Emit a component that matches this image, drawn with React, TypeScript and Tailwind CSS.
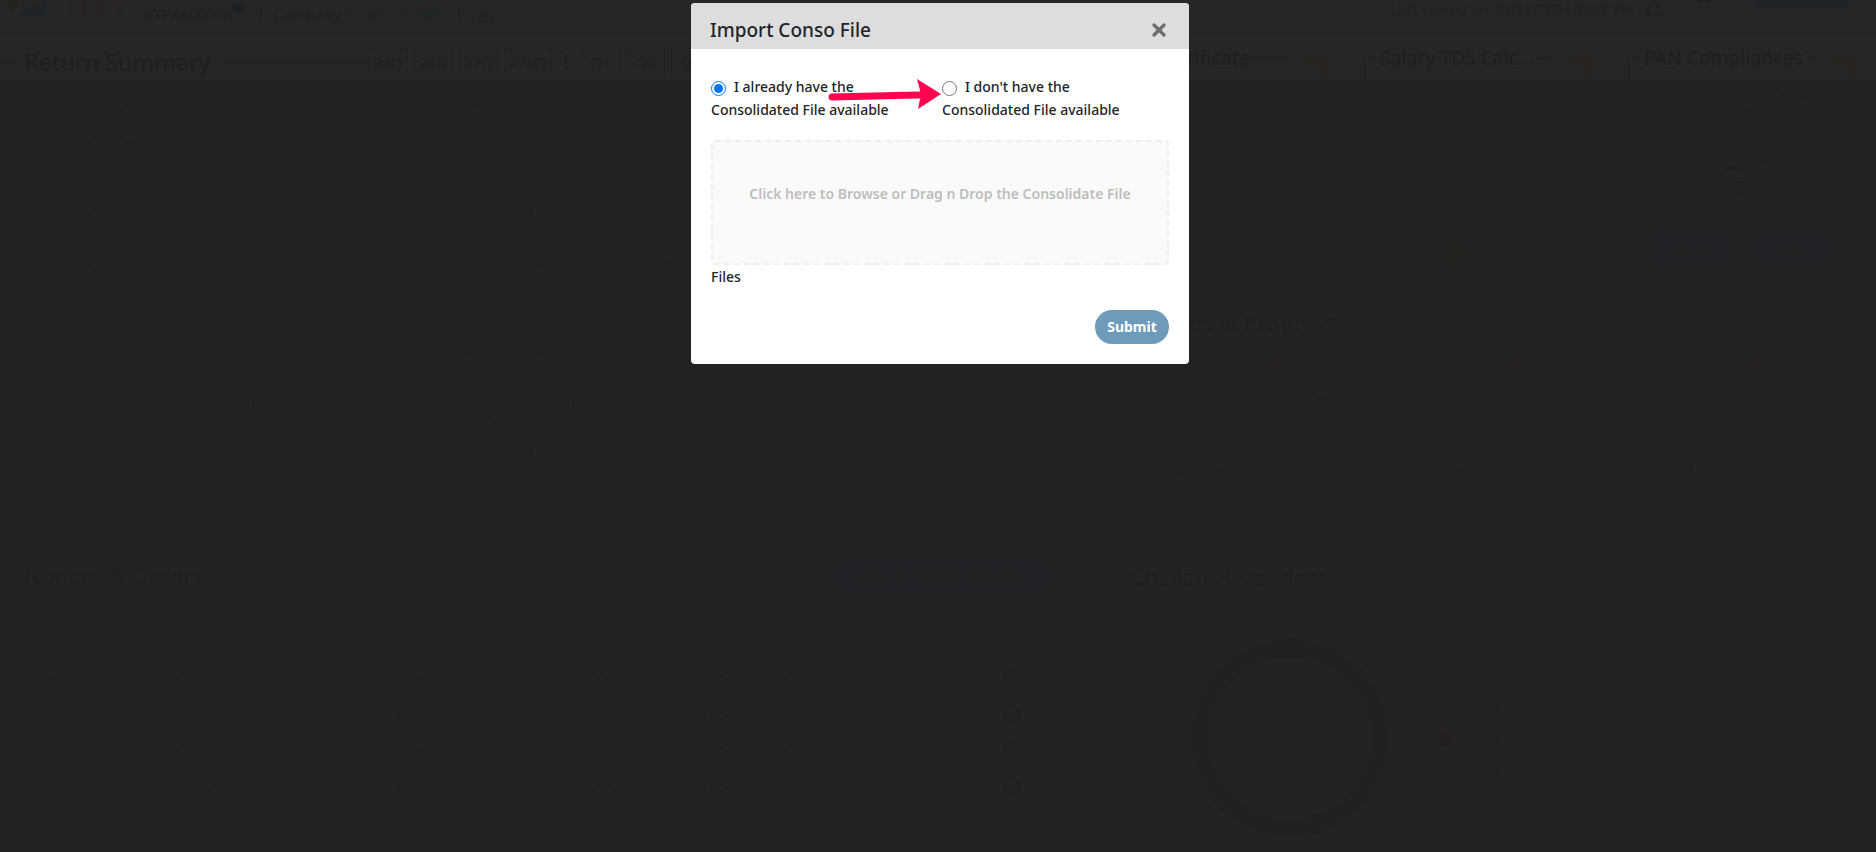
import React, { useState } from 'react';
import { ArrowDown, Download, FileDown, Pencil, Pin, RefreshCw, X } from 'lucide-react';

const forms = ['24Q', '26Q', '27Q', '27EQ'];
const quarters = ['Q1', 'Q2', 'Q3', 'Q4'];

const currentReturns = [
  { form: '24Q | Q4', date: 'In progress', type: 'Regular', status: 'NA', ack: 'NA' },
  { form: '24Q | Q2', date: 'In progress', type: 'Correction', status: 'NA', ack: 'NA' },
  { form: '24Q | Q1', date: '19/07/2024', type: 'Regular', status: 'Processed Without Defaults', ack: '' },
  { form: '26Q | Q2', date: '23/10/2024', type: 'Regular', status: 'Processed With Defaults', ack: 'NA' },
];

const completedReturns = [
  { form: '24Q | Q2', date: '17/10/2024', type: 'Regular', status: 'Processed Without Defaults', ack: '' },
  { form: '27EQ | Q2', date: '14/10/2024', type: 'Regular', status: 'Processed Without Defaults', ack: '' },
  { form: '27EQ | Q1', date: '11/07/2024', type: 'Regular', status: 'Processed Without Defaults', ack: '' },
];

const notices = [
  { fy: '2024-2025', form: '26Q | Q2', date: '23/10/2024', subject: 'Intimation with Demand u/s 200A/206CB', ref: 'TDS/2425/26Q/D/100065506079' },
  { fy: '2023-2024', form: '26Q | Q3', date: '23/05/2024', subject: 'Intimation with Demand u/s 154', ref: 'TDS/2324/26Q/D/100062366246' },
  { fy: '2023-2024', form: '26Q | Q2', date: '23/05/2024', subject: 'Intimation with Demand u/s 154', ref: 'TDS/2324/26Q/D/100062366247' },
  { fy: '2023-2024', form: '26Q | Q4', date: '28/05/2024', subject: 'Intimation with Demand u/s 200A/206CB', ref: 'TDS/2324/26Q/D/100062945232' },
];

const noticeColumns = [
  { label: 'FY', width: 'w-[138px]' },
  { label: 'Form | Qtr', width: 'w-[130px]' },
  { label: 'Date', width: 'w-[101px]' },
  { label: 'Subject', width: 'w-[309px]' },
  { label: 'Reference No', width: 'w-[300px]' },
];

const inProgress = ['Regular | Form 24Q | Q4', 'Correction | Form 26Q | Q1', 'Regular | Form 26Q | Q2'];

const legend = [
  { label: 'Total verified challans (9,20,800.00)', color: 'bg-[#212222]' },
  { label: 'Total unverified challans (1,515.00)', color: 'bg-[#242021]' },
  { label: 'Total unconsumed that can be utilized (790.00)', color: 'bg-[#242220]' },
];

const TopBar: React.FC = () => (
  <header className="flex h-[34px] items-start justify-between overflow-hidden border-b border-[#222222] pl-2 pr-7 text-[#1f1f1f]">
    <div className="flex h-7 items-center">
      <svg viewBox="0 0 38 28" className="h-7 w-[38px]">
        <path d="M0 0h12L2 14z" fill="#22251f" />
        <path d="M6 17 36 0h2v17z" fill="#1f2428" />
        <path d="M2 15 28 0h7L4 17z" fill="#282620" />
      </svg>
      <span className="ml-4 -mt-5 text-[34px] leading-8 text-[#2a2322]">TDS</span>
      <span className="ml-5 text-[15px]">KTPXX0000B</span>
      <span className="mb-3 flex size-3 items-center justify-center rounded-full bg-[#1c2126] text-[9px]">i</span>
      <span className="ml-4 h-3 w-px bg-[#202020]" />
      <span className="ml-3 text-[15px]">Company</span>
      <span className="ml-2 h-3 w-px bg-[#202020]" />
      <Pencil className="ml-4 size-4 text-[#292323]" />
      <span className="ml-5 h-3 w-px bg-[#202020]" />
      <svg viewBox="0 0 20 16" className="ml-4 h-4 w-5">
        <path d="M0 6 10 15 20 6 14 3H6z" fill="#1f2624" />
        <circle cx="10" cy="3" r="2" fill="#2a2120" />
      </svg>
      <span className="ml-5 h-3 w-px bg-[#202020]" />
      <Download className="ml-4 size-5 text-[#272020]" />
    </div>
    <div className="flex items-start text-sm text-[#232021]">
      <span>Last synced on: 05/11/2024 02:26 PM</span>
      <RefreshCw className="ml-3 mt-0.5 size-4 text-[#1c2020]" />
      <span className="ml-9 h-0.5 w-3 rounded-b bg-[#1f1f1f]" />
      <span className="ml-11 h-2 w-[94px] rounded-b bg-[#1f2327]" />
    </div>
  </header>
);

const Tab: React.FC<{ label: string }> = ({ label }) => (
  <button type="button" className="h-7 min-w-[39px] border border-[#232323] bg-[#262626] px-1 text-[15px]">
    {label}
  </button>
);

const CardTitle: React.FC<{ title: string }> = ({ title }) => (
  <div className="flex h-full items-start pt-2 text-[#1f1f1f]">
    <span className="mt-4 h-[22px] w-3 border-l border-t border-[#202020]" />
    <h3 className="whitespace-nowrap px-1 text-[19px] font-medium leading-8">{title}</h3>
    <span className="mt-4 h-px flex-1 bg-[#202020]" />
    <svg viewBox="0 0 38 32" className="mt-4 h-8 w-[38px]">
      <path d="M0 0h38v32C37 14 26 3 0 0z" fill="#282420" />
    </svg>
  </div>
);

const ReturnsTable: React.FC<{ label: string; rows: typeof currentReturns; head?: boolean }> = ({ label, rows, head }) => (
  <div className="flex">
    <div className="flex w-[66px] items-center justify-center">
      <span className="rotate-180 whitespace-nowrap text-sm text-[#222222] [writing-mode:vertical-rl]">{label}</span>
    </div>
    <table className="flex-1 table-fixed text-left text-sm leading-5">
      {head && (
        <thead>
          <tr className="h-9 align-top">
            <th className="w-[152px] font-medium">Form | Qtr</th>
            <th className="w-[124px] font-medium">Filing Date</th>
            <th className="w-[124px] font-medium">Filing Type</th>
            <th className="w-[168px] font-medium">Processing Status</th>
            <th className="font-medium">Ack Receipt</th>
          </tr>
        </thead>
      )}
      <tbody>
        {rows.map((row) => (
          <tr key={row.form} className={row.status.length > 2 ? 'h-[51px] align-top' : 'h-9 align-top'}>
            <td className="w-[152px] pl-2">{row.form}</td>
            <td className="w-[124px]">{row.date}</td>
            <td className="w-[124px] text-[#222222]">{row.type}</td>
            <td className="w-[168px] pr-10">{row.status}</td>
            <td className="pl-8">{row.ack || <FileDown className="size-4 text-[#222222]" />}</td>
          </tr>
        ))}
      </tbody>
    </table>
  </div>
);

const Dashboard: React.FC = () => (
  <div className="flex min-h-screen flex-col overflow-hidden bg-[#232323] text-[#1f1f1f]">
    <div className="bg-[#262626]">
      <TopBar />
      <div className="grid h-[46px] grid-cols-[7fr_5fr] overflow-hidden">
        <div className="flex items-center">
          <span className="mr-2 h-px w-4 bg-[#202020]" />
          <h2 className="text-[23px] font-medium leading-9">Return Summary</h2>
          <span className="ml-2 h-px w-[150px] bg-[#202020]" />
          <div className="flex items-center gap-1.5">
            {forms.map((f) => <Tab key={f} label={f} />)}
            <span className="mx-2 h-4 w-0.5 bg-[#1f1f1f]" />
            {quarters.map((q) => <Tab key={q} label={q} />)}
          </div>
        </div>
        <div className="grid grid-cols-3 gap-9 pl-1.5 pr-5">
          <CardTitle title="TDS Certificate" />
          <CardTitle title="Salary TDS Calc..." />
          <CardTitle title="PAN Compliances" />
        </div>
      </div>
    </div>

    <div className="grid flex-1 grid-cols-[7fr_5fr] text-[#212121]">
      <div className="pt-4">
        <ReturnsTable label="Current Returns" rows={currentReturns} head />
        <div className="pt-9">
          <ReturnsTable label="Completed Returns" rows={completedReturns} />
        </div>
        <section className="px-6 pt-16">
          <div className="flex items-center justify-between pr-5">
            <h2 className="text-[22px] font-medium text-[#202020]">Notices &amp; Orders</h2>
            <button type="button" className="h-8 w-[218px] rounded-full bg-[#202225] text-sm text-[#242422]">
              View all TRACES Requests
            </button>
          </div>
          <table className="mt-8 w-full table-fixed text-left text-sm text-[#212121]">
            <thead>
              <tr className="h-9 text-[#222222]">
                {noticeColumns.map((col) => (
                  <th key={col.label} className={`${col.width} font-medium`}>
                    <span className="flex items-center justify-between whitespace-nowrap px-3">
                      {col.label}
                      <ArrowDown className="size-3" />
                    </span>
                  </th>
                ))}
                <th className="font-medium">Action</th>
              </tr>
            </thead>
            <tbody>
              {notices.map((n) => (
                <tr key={n.ref} className="h-9">
                  <td>{n.fy}</td>
                  <td>{n.form}</td>
                  <td>{n.date}</td>
                  <td>{n.subject}</td>
                  <td>{n.ref}</td>
                  <td><FileDown className="size-5" /></td>
                </tr>
              ))}
            </tbody>
          </table>
        </section>
      </div>

      <div className="pr-5">
        <div className="grid h-[220px] grid-cols-3 gap-9 pl-1.5">
          <div className="flex items-end justify-end pb-9">
            <svg viewBox="0 0 150 134" className="h-[134px] w-[150px]">
              <path d="M2 132V2h90v130z" fill="none" stroke="#222222" strokeWidth="3" />
              <path d="M2 104q24-18 44 8v20H2z" fill="#222222" />
              <path d="M98 36 120 14v40z" fill="#222222" />
            </svg>
          </div>
          <div className="flex items-end justify-center pb-9">
            <svg viewBox="0 0 140 116" className="h-[116px] w-[140px]">
              <path d="M48 0h70v14H48z" fill="#222222" />
              <path d="M26 114V34h100v80M26 58h100" fill="none" stroke="#222222" strokeWidth="2" />
              <path d="M0 58h47v58H0z" fill="#212322" />
              <circle cx="47" cy="104" r="11" fill="#242320" />
            </svg>
          </div>
          <div className="flex flex-col items-center pt-1 text-center text-sm leading-[19px]">
            <p className="whitespace-nowrap">PAN verification and Compliance<br />check u/s 206AB &amp; 206CCA</p>
            <svg viewBox="0 0 60 60" className="mt-9 size-[60px]">
              <circle cx="22" cy="24" r="14" fill="none" stroke="#212121" strokeWidth="2" />
              <path d="M18 24h16M52 4q-8 0-8 14M52 4q6 0 6 14" fill="none" stroke="#212121" strokeWidth="2" />
              <path d="m14 38-8 18" stroke="#212423" strokeWidth="4" />
            </svg>
            <div className="mt-3 flex gap-5 text-[#242422]">
              <button type="button" className="h-9 w-[82px] rounded-full bg-[#202225]">Single</button>
              <button type="button" className="h-9 w-[82px] rounded-full bg-[#202225]">Bulk</button>
            </div>
          </div>
        </div>

        <section className="pl-9 pt-1">
          <h2 className="text-[22px] font-medium leading-9 text-[#202020]">Returns in Progress</h2>
          <div className="grid grid-cols-3 gap-7 pl-2 pr-6 pt-4 text-sm">
            {inProgress.map((title) => (
              <div key={title} className="flex flex-col">
                <Pin className="ml-[60%] size-5 rotate-45 fill-current text-[#252021]" />
                <p className="pt-3 text-center">{title}</p>
                <p className="flex justify-between pt-6"><span>No. of Transaction:</span><span>0</span></p>
                <p className="flex justify-between pt-2"><span>Unmapped Amt:</span><span>0.00</span></p>
              </div>
            ))}
          </div>
        </section>

        <section className="pl-9 pt-[78px]">
          <h2 className="text-[22px] font-medium leading-9 text-[#202020]">Challans Overview</h2>
          <div className="flex items-center gap-12 pl-[60px] pt-11">
            <svg viewBox="0 0 200 200" className="size-[200px]">
              <circle cx="100" cy="100" r="90" fill="none" stroke="#212121" strokeWidth="18" />
            </svg>
            <ul className="flex flex-col gap-3 text-sm">
              {legend.map((item) => (
                <li key={item.label} className="flex items-center gap-4">
                  <span className={`size-4 ${item.color}`} />
                  {item.label}
                </li>
              ))}
            </ul>
          </div>
        </section>
      </div>
    </div>
  </div>
);

const ImportDialog: React.FC = () => {
  const [hasFile, setHasFile] = useState(true);

  return (
    <div className="fixed inset-0 flex items-start justify-center pl-1 pt-[3px]">
      <div role="dialog" aria-labelledby="import-title" className="relative w-full max-w-[498px] overflow-hidden rounded bg-white text-[#212529]">
        <div className="flex h-[46px] items-center justify-between bg-[#dddddd] pl-[19px] pr-5 pt-2">
          <h1 id="import-title" className="text-[19px] font-medium">Import Conso File</h1>
          <button type="button" aria-label="Close" className="text-[#6e6e6e]">
            <X className="size-5" strokeWidth={4} />
          </button>
        </div>

        <form className="px-5 pb-5 pt-[26px] text-sm leading-[23px] font-medium" onSubmit={(e) => e.preventDefault()}>
          <div className="grid grid-cols-2 gap-1">
            <label className="pr-10">
              <input
                type="radio"
                name="conso"
                checked={hasFile}
                onChange={() => setHasFile(true)}
                className="mr-2 size-[15px] align-middle accent-[#0075ff]"
              />
              I already have the Consolidated File available
            </label>
            <label className="pr-10">
              <input
                type="radio"
                name="conso"
                checked={!hasFile}
                onChange={() => setHasFile(false)}
                className="mr-2 size-[15px] align-middle accent-[#0075ff]"
              />
              I don't have the Consolidated File available
            </label>
          </div>

          <label className="mt-[19px] flex h-[125px] cursor-pointer justify-center rounded border-2 border-dashed border-[#eeeeee] bg-[#fafafa] pt-10 font-semibold text-[#bdbdbd]">
            Click here to Browse or Drag n Drop the Consolidate File
            <input type="file" className="sr-only" />
          </label>
          <p>Files</p>

          <div className="mt-[22px] flex justify-end">
            <button type="submit" className="h-[34px] w-[74px] rounded-full bg-[#6f9bbb] pb-0.5 font-bold text-white">
              Submit
            </button>
          </div>
        </form>

        {/* pointer to the second option */}
        <svg viewBox="0 0 114 32" className="pointer-events-none absolute left-[137px] top-[75px] h-8 w-[114px]">
          <path d="M4 19 92 17" stroke="#ff0550" strokeWidth="7" strokeLinecap="round" />
          <path d="M89 1 113 16 90 31 93 16z" fill="#ff0550" />
        </svg>
      </div>
    </div>
  );
};

const App: React.FC = () => (
  <div className="font-['Noto_Sans','Open_Sans',sans-serif]">
    <Dashboard />
    <ImportDialog />
  </div>
);

export default App;
